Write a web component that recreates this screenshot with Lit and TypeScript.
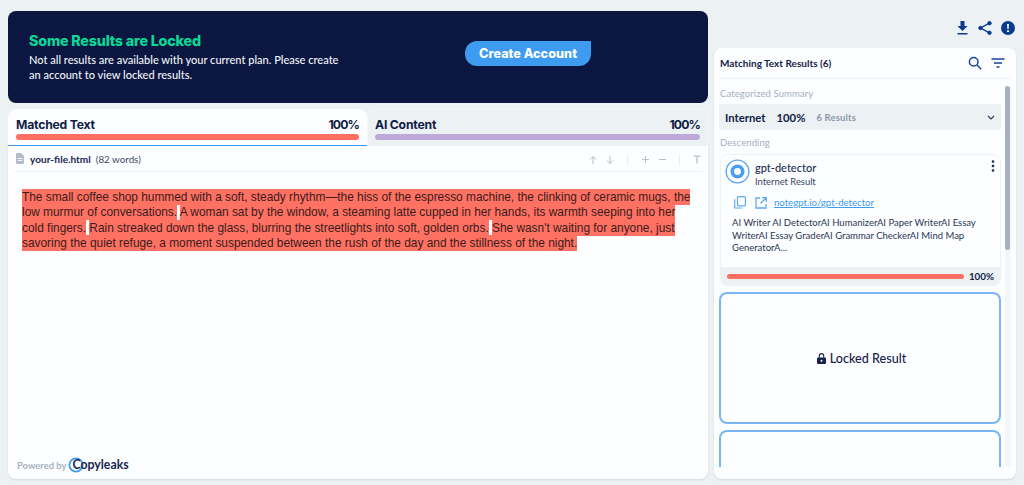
import { LitElement, html, css } from "lit";
import { customElement } from "lit/decorators.js";

@customElement("app-root")
export class AppRoot extends LitElement {
  static styles = css`
    :host { display: block; width: 1024px; height: 485px; background: #ecf1f4; overflow: hidden; font-family: Lato, "Noto Sans", sans-serif; color: #0f1c46; }
    * { box-sizing: border-box; }
    svg { display: block; flex: none; }
    .page { display: flex; height: 485px; padding: 11px 8px 6px 8px; gap: 6px; }
    .left { width: 700px; display: flex; flex-direction: column; }
    .banner { height: 92px; background: #0b1741; border-radius: 8px; display: flex; align-items: center; padding: 0 0 0 21px; flex: none; }
    .banner-text { width: 436px; }
    .banner-title { font: 800 14.3px/18px Inter, sans-serif; color: #0ad896; letter-spacing: -0.2px; margin-bottom: 2px; }
    .banner-desc { font: 500 11.05px/15px Lato, sans-serif; color: #f1f4f8; width: 316px; }
    .cta { width: 126px; height: 25px; background: #3d9bf0; color: #fff; font: 800 12.7px/25px Inter, sans-serif; text-align: center; border-radius: 12px 0 12px 12px; margin-top: -8px; }
    .tabs { display: flex; height: 37px; margin-top: 6px; flex: none; }
    .tab { padding: 8px 8px 0; }
    .tab1 { width: 359px; background: #fcfeff; border-radius: 8px 8px 0 0; border-bottom: 1px solid #3d9bf0; }
    .tab2 { flex: 1; background: #ecf1f4; border: 1px solid #f3f6f8; border-bottom: 0; border-radius: 8px 8px 0 0; padding: 7px 7px 0; }
    .tab-row { display: flex; justify-content: space-between; font: 700 12.2px/15px Inter, sans-serif; letter-spacing: -0.2px; height: 16px; }
    .tab-row span + span { letter-spacing: -0.9px; }
    .bar { height: 6px; border-radius: 3px; margin-top: 1px; }
    .coral { background: #ff6f61; }
    .purple { background: #bfa9d8; }
    .doc { flex: 1; background: #fcfeff; border-radius: 0 0 8px 8px; display: flex; flex-direction: column; box-shadow: 0 1px 2px rgba(40,60,90,.12); min-height: 0; }
    .file-row { height: 26px; margin: 0 5px 0 6px; border-bottom: 1px solid #eef2f5; display: flex; align-items: center; padding: 0 2px; flex: none; }
    .file-name { font: 700 10.1px Lato, sans-serif; margin-left: 6px; color: #1b2750; }
    .file-words { font: 400 9.8px Lato, sans-serif; margin-left: 5px; color: #3c4665; }
    .tools { margin-left: auto; display: flex; align-items: center; color: #b7bfcc; margin-top: 2px; }
    .tools svg + svg { margin-left: 7px; }
    .tools .wide { margin-left: 8px; }
    .sep { width: 1px; height: 12px; background: #edf1f4; margin: 0 13px 0 12px; }
    .text { font: 400 11.88px/15.4px "Liberation Sans", Arial, sans-serif; color: #3a1c1a; padding: 18px 0 0 14px; flex: 1; width: 690px; }
    .text span { background: #ff7163; padding: 1px 0; }
    .powered { display: flex; align-items: center; padding: 0 0 6px 9px; flex: none; }
    .powered-by { font: 700 9.4px Lato, sans-serif; color: #a9b2c2; }
    .brand { position: relative; font: 700 12.3px/16px Lato, sans-serif; color: #1a2650; margin-left: 2px; padding-left: 4px; }
    .brand svg { position: absolute; left: 0; top: 0; }
    .brand span { position: relative; }
    .right { flex: 1; display: flex; flex-direction: column; }
    .top-icons { height: 37px; display: flex; justify-content: flex-end; align-items: flex-start; padding-top: 10px; gap: 9px; padding-right: 1px; color: #0b3a8f; flex: none; }
    .top-icons svg:first-child { margin-right: 1px; }
    .panel { flex: 1; background: #fcfeff; border-radius: 8px; box-shadow: 0 1px 2px rgba(40,60,90,.14); padding: 0 5px 0; display: flex; flex-direction: column; min-height: 0; }
    .panel-head { height: 31px; border-bottom: 1px solid #eef2f5; display: flex; align-items: center; justify-content: space-between; padding: 0 6px 0 1px; flex: none; }
    .panel-title { font: 700 10px Lato, sans-serif; color: #16224b; }
    .head-icons { display: flex; gap: 9px; color: #14449b; align-items: center; }
    .panel-body { display: flex; height: 388px; gap: 4px; flex: none; }
    .list { width: 282px; overflow: hidden; display: flex; flex-direction: column; flex: none; }
    .label { font: 400 9.5px/13px Lato, sans-serif; color: #a6afbf; letter-spacing: .1px; flex: none; padding-left: 1px; }
    .first { margin-top: 8px; }
    .cat { height: 26px; background: #ecf1f4; border-radius: 3px; display: flex; align-items: center; padding: 0 6px; margin: 4px 0 6px; flex: none; }
    .cat b { font: 700 11.3px Lato, sans-serif; }
    .cat .pct { margin-left: 11px; font-size: 11.3px; font-weight: 700; }
    .cat small { font: 700 9.4px Lato, sans-serif; color: #8d96a8; margin-left: 11px; letter-spacing: .2px; }
    .cat svg { margin-left: auto; }
    .card { margin: 5px 0 6px 1px; height: 132px; width: 281px; border: 1px solid #eef2f5; border-radius: 7px; overflow: hidden; display: flex; flex-direction: column; flex: none; }
    .card-top { display: flex; padding: 4px 5px 0 4px; align-items: flex-start; flex: none; }
    .card-name { margin-left: 5px; }
    .card-title { font: 500 11px/15px Lato, sans-serif; color: #232d4f; margin-top: 1px; }
    .card-sub { font: 400 9.4px/14px Lato, sans-serif; color: #3b4565; }
    .dots { margin-left: auto; margin-top: 1px; color: #1c2850; }
    .links { display: flex; align-items: center; padding: 7px 0 0 13px; flex: none; color: #62a9f2; }
    .links svg + svg { margin-left: 9px; }
    .links a { font: 400 9.6px Lato, sans-serif; color: #3d9bf0; text-decoration: underline; margin-left: 7px; }
    .snippet { font: 400 9.5px/12.6px Lato, sans-serif; color: #2b3553; padding: 8px 8px 0 11px; flex: 1; }
    .card-foot { height: 18px; background: #ecf1f4; display: flex; align-items: center; padding: 0 6px; flex: none; }
    .card-foot .bar { width: 238px; margin: 0; height: 5px; }
    .card-foot b { font: 700 9.8px Lato, sans-serif; margin-left: 5px; }
    .locked { width: 282px; height: 132px; border: 2px solid #78b6f6; border-radius: 8px; display: flex; align-items: center; justify-content: center; gap: 4px; margin-bottom: 6px; flex: none; font: 500 12.6px Lato, sans-serif; color: #16224b; padding-left: 3px; }
    .scroll { width: 6px; margin-top: 7px; background: #f3f6f8; height: 381px; flex: none; border-radius: 3px; }
    .thumb { width: 5px; height: 164px; background: #a8b0c2; border-radius: 3px; }
  `;

  render() {
    const arrowUp = html`<svg width="10" height="10" viewBox="0 0 10 10" fill="none" stroke="currentColor" stroke-width="1"><path d="M5 9V1.5M2 4.5l3-3 3 3"/></svg>`;
    const arrowDown = html`<svg width="10" height="10" viewBox="0 0 10 10" fill="none" stroke="currentColor" stroke-width="1"><path d="M5 1v7.5M2 5.5l3 3 3-3"/></svg>`;
    return html`
      <div class="page">
        <div class="left">
          <div class="banner">
            <div class="banner-text">
              <div class="banner-title">Some Results are Locked</div>
              <div class="banner-desc">Not all results are available with your current plan. Please create an account to view locked results.</div>
            </div>
            <div class="cta">Create Account</div>
          </div>
          <div class="tabs">
            <div class="tab tab1">
              <div class="tab-row"><span>Matched Text</span><span>100%</span></div>
              <div class="bar coral"></div>
            </div>
            <div class="tab tab2">
              <div class="tab-row"><span>AI Content</span><span>100%</span></div>
              <div class="bar purple"></div>
            </div>
          </div>
          <div class="doc">
            <div class="file-row">
              <svg width="8" height="11" viewBox="0 0 8 11"><path fill="#b3bccb" d="M1 0h4l3 3v7a1 1 0 0 1-1 1H1a1 1 0 0 1-1-1V1a1 1 0 0 1 1-1z"/><path stroke="#fcfeff" stroke-width=".8" d="M1.500 5.500h5M1.500 7.500h5"/></svg>
              <span class="file-name">your-file.html</span>
              <span class="file-words">(82 words)</span>
              <div class="tools">
                ${arrowUp}${arrowDown}
                <div class="sep"></div>
                <svg width="9" height="9" viewBox="0 0 9 9" stroke="currentColor" stroke-width="1"><path d="M4.500 1v7M1 4.500h7"/></svg>
                <svg class="wide" width="9" height="9" viewBox="0 0 9 9" stroke="currentColor" stroke-width="1"><path d="M1 4.500h7"/></svg>
                <div class="sep"></div>
                <svg width="8" height="9" viewBox="0 0 8 9" fill="none" stroke="currentColor" stroke-width="1.300"><path d="M.5 1.200h7M4 1.200V8.500"/></svg>
              </div>
            </div>
            <div class="text">
              <span>The small coffee shop hummed with a soft, steady rhythm—the hiss of the espresso machine, the clinking of ceramic mugs, the low murmur of conversations.</span> <span>A woman sat by the window, a steaming latte cupped in her hands, its warmth seeping into her cold fingers.</span> <span>Rain streaked down the glass, blurring the streetlights into soft, golden orbs.</span> <span>She wasn't waiting for anyone, just savoring the quiet refuge, a moment suspended between the rush of the day and the stillness of the night.</span>
            </div>
            <div class="powered">
              <span class="powered-by">Powered by</span>
              <span class="brand">
                <svg width="16" height="16" viewBox="0 0 16 16" fill="none"><circle cx="8" cy="8" r="6.600" stroke="#3d9bf0" stroke-width="1.800"/></svg>
                <span>Copyleaks</span>
              </span>
            </div>
          </div>
        </div>
        <div class="right">
          <div class="top-icons">
            <svg width="11" height="14" viewBox="0 0 11 14" fill="currentColor"><path d="M3.500 0h4v5h3l-5 5-5-5h3zM.5 12h10v1.500H.5z"/></svg>
            <svg width="14" height="14" viewBox="0 0 14 14" fill="currentColor" stroke="currentColor"><circle cx="11.500" cy="2.200" r="1.700"/><circle cx="2.500" cy="7" r="1.700"/><circle cx="11.500" cy="11.800" r="1.700"/><path fill="none" stroke-width="1.400" d="M11.500 2.200 2.500 7l9 4.800"/></svg>
            <svg width="14" height="14" viewBox="0 0 14 14"><circle cx="7" cy="7" r="7" fill="currentColor"/><path fill="#ecf1f4" d="M6 3h2l-.3 5H6.300zM6 9.300h2v1.800H6z"/></svg>
          </div>
          <div class="panel">
            <div class="panel-head">
              <span class="panel-title">Matching Text Results (6)</span>
              <div class="head-icons">
                <svg width="14" height="14" viewBox="0 0 14 14" fill="none" stroke="currentColor" stroke-width="1.500"><circle cx="5.700" cy="5.700" r="4.300"/><path d="m9 9 4.200 4.200"/></svg>
                <svg width="14" height="12" viewBox="0 0 14 12" fill="none" stroke="currentColor" stroke-width="1.300"><path d="M.5 2h13M3 6h8M5.500 10h3"/></svg>
              </div>
            </div>
            <div class="panel-body">
              <div class="list">
                <div class="label first">Categorized Summary</div>
                <div class="cat">
                  <b>Internet</b><span class="pct">100%</span><small>6 Results</small>
                  <svg width="8" height="5" viewBox="0 0 8 5" fill="none" stroke="#2b3553" stroke-width="1.100"><path d="m1 1 3 3 3-3"/></svg>
                </div>
                <div class="label">Descending</div>
                <div class="card">
                  <div class="card-top">
                    <svg width="25" height="25" viewBox="0 0 25 25" fill="none"><circle cx="12.500" cy="12.500" r="11.400" stroke="#5ba6f3" stroke-width="1.300"/><circle cx="12.500" cy="12.500" r="5.200" stroke="#4a9df1" stroke-width="3.600"/></svg>
                    <div class="card-name">
                      <div class="card-title">gpt-detector</div>
                      <div class="card-sub">Internet Result</div>
                    </div>
                    <svg class="dots" width="4" height="12" viewBox="0 0 4 12" fill="currentColor"><circle cx="2" cy="1.500" r="1.300"/><circle cx="2" cy="6" r="1.300"/><circle cx="2" cy="10.500" r="1.300"/></svg>
                  </div>
                  <div class="links">
                    <svg width="12" height="13" viewBox="0 0 12 13" fill="none" stroke="currentColor" stroke-width="1.200"><rect x="3.500" y=".6" width="7.900" height="9.300" rx="1"/><path d="M.7 3.300V12h7.500"/></svg>
                    <svg width="12" height="12" viewBox="0 0 12 12" fill="none" stroke="currentColor" stroke-width="1.300"><path d="M5 1H1v10h10V7M7 .7h4.300V5M11 1 5.500 6.500"/></svg>
                    <a>notegpt.io/gpt-detector</a>
                  </div>
                  <div class="snippet">AI Writer AI DetectorAI HumanizerAI Paper WriterAI Essay WriterAI Essay GraderAI Grammar CheckerAI Mind Map GeneratorA...</div>
                  <div class="card-foot"><div class="bar coral"></div><b>100%</b></div>
                </div>
                <div class="locked">
                  <svg width="9" height="11" viewBox="0 0 9 11" fill="#16224b"><path d="M1 4.400h7a1 1 0 0 1 1 1V10a1 1 0 0 1-1 1H1a1 1 0 0 1-1-1V5.400a1 1 0 0 1 1-1z"/><path fill="none" stroke="#16224b" stroke-width="1.100" d="M2.300 4.800V2.800a2.200 2.200 0 0 1 4.400 0v2"/><circle cx="4.500" cy="7.700" r="1" fill="#fcfeff"/></svg>
                  <span>Locked Result</span>
                </div>
                <div class="locked"></div>
              </div>
              <div class="scroll"><div class="thumb"></div></div>
            </div>
          </div>
        </div>
      </div>
    `;
  }
}
